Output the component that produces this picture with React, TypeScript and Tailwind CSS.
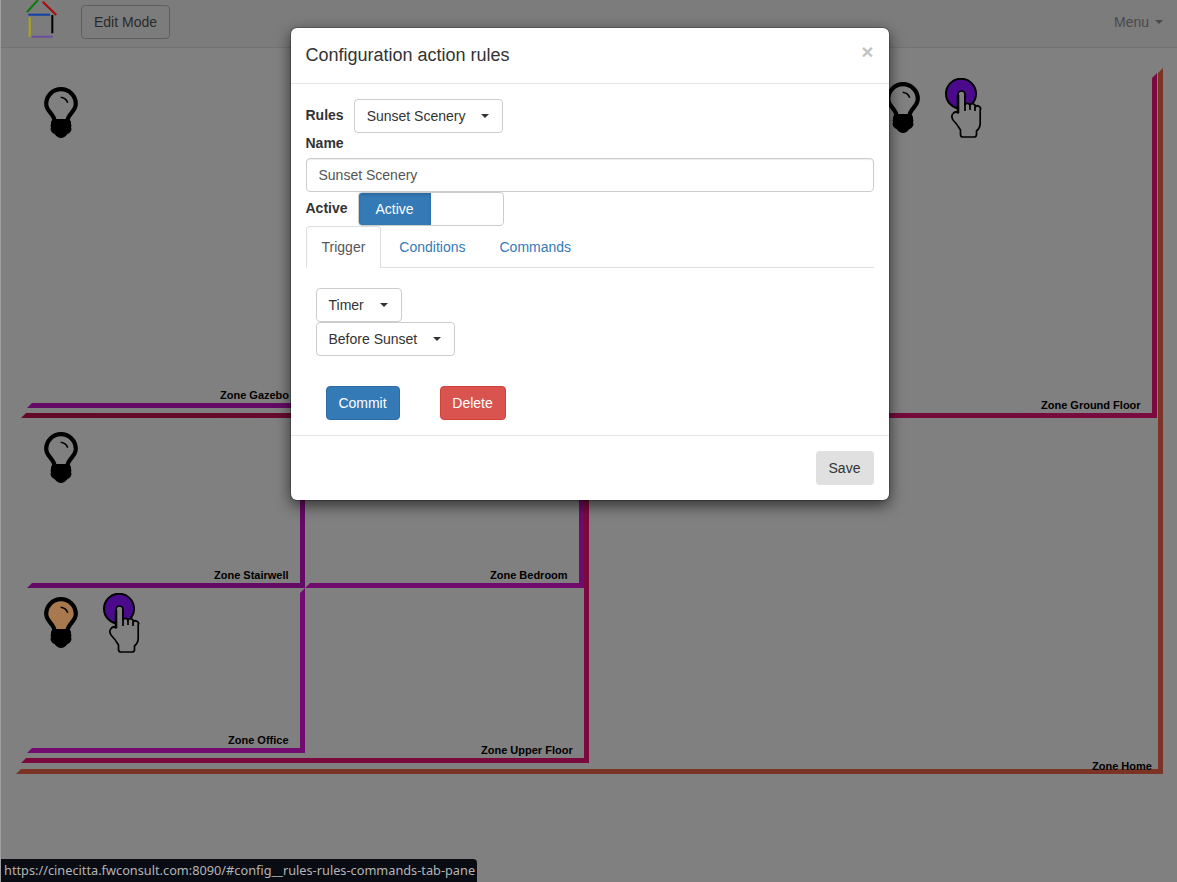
import React from 'react';

const Caret: React.FC<{ className?: string }> = ({ className = 'border-t-[#333]' }) => (
    <span className={`inline-block w-0 h-0 border-t-4 border-x-4 border-x-transparent ${className}`} />
);

const Dropdown: React.FC<{ label: string; className: string }> = ({ label, className }) => (
    <button className={`h-[34px] pl-3 pr-[13px] flex items-center justify-between bg-white border border-[#ccc] rounded text-sm text-[#333] ${className}`}>
        <span>{label}</span>
        <Caret />
    </button>
);

const Logo: React.FC = () => (
    <svg width="34" height="40" viewBox="0 0 34 40" className="ml-6 shrink-0 self-start" strokeWidth="2" fill="none">
        <path d="M2 12 13 0" stroke="#0c7a0c" />
        <path d="M17.7 1.7 31.3 15" stroke="#aa0a0a" />
        <path d="M3.3 14.7H25" stroke="#1040a8" />
        <path d="M4.7 17.3V36.7" stroke="#b0a80a" />
        <path d="M27.3 15V33.3" stroke="#000" />
        <path d="M6.7 36.7H27.7" stroke="#6a4fa0" />
    </svg>
);

const Bulb: React.FC<{ fill?: string; className: string }> = ({ fill = 'none', className }) => (
    <svg width="34" height="51" viewBox="0 0 34 51" className={`absolute ${className}`}>
        <path
            d="M10.5 34C10.5 27 2.2 24.5 2.2 17A14.8 14.8 0 0 1 31.8 17C31.8 24.5 23.5 27 23.5 34Z"
            fill={fill}
            stroke="#000"
            strokeWidth="4.2"
        />
        <path d="M16.7 10.3Q22 11 23.7 15.7" fill="none" stroke="#000" strokeWidth="1.6" />
        <path
            d="M8 33H26Q27.5 35 27 37L27.5 38.5 27 40 27.5 42Q27 45.5 23.5 47Q20.5 51 17 51Q13.5 51 10.5 47Q7 45.5 6.5 42L7 40 6.5 38.5 7 37Q6.5 35 8 33Z"
            fill="#000"
        />
    </svg>
);

const Hand: React.FC<{ className: string }> = ({ className }) => (
    <svg width="38" height="61" viewBox="0 0 38 61" className={`absolute ${className}`}>
        <circle cx="16" cy="15.7" r="15" fill="#4b0a8c" stroke="#000" strokeWidth="2" />
        <path
            d="M13 35V16.5A3.5 3.5 0 0 1 20 16.5V27A2.6 2.6 0 0 1 25 27.5A2.6 2.6 0 0 1 30 29.5A2.7 2.7 0 0 1 35.2 32V45Q35.2 50 31.5 53V56.5Q31.5 59 29 59H18Q15.5 59 15.5 56.5V52Q12 46 8 42Q5.5 38 8.5 35Q11 33 13 35Z"
            fill="#808080"
            stroke="#000"
            strokeWidth="1.7"
            strokeLinejoin="round"
        />
        <path d="M13 17V35" fill="none" stroke="#000" strokeWidth="2.6" />
        <path d="M20 16.5V33M25 27.5V32M30 29.5V33" fill="none" stroke="#000" strokeWidth="1.7" />
    </svg>
);

const ZoneLines: React.FC = () => (
    <svg width="1177" height="882" viewBox="0 0 1177 882" className="absolute -left-px top-0">
        <defs>
            <linearGradient id="ground" x1="0" x2="1" y1="0" y2="0">
                <stop offset="0" stopColor="#620a28" />
                <stop offset="1" stopColor="#7a0a40" />
            </linearGradient>
        </defs>
        <polygon points="16,774 21,769 1158,769 1158,73 1163,68 1163,774" fill="#7a3324" />
        <polygon points="21,418 26,413 1152,413 1152,78 1157,73 1157,418" fill="url(#ground)" />
        <polygon points="27,408 32,403 300,403 300,408" fill="#640a64" />
        <polygon points="21,763 26,758 584,758 584,490 589,490 589,763" fill="#7a0a3e" />
        <polygon points="27,588 32,583 300,583 300,490 305,490 305,588" fill="#640a64" />
        <polygon points="305,588 310,583 579,583 579,490 584,490 584,588" fill="#700a6c" />
        <polygon points="27,753 32,748 300,748 300,593 305,588 305,753" fill="#720a72" />
    </svg>
);

const zoneLabelClass = 'absolute text-[11px] leading-3 font-bold text-black whitespace-nowrap';

export default function App() {
    return (
        <div className="relative w-[1177px] h-[882px] overflow-hidden bg-[#808080] border-l border-l-[#a0a0a0] font-['Liberation_Sans',Arial,sans-serif]">
            <nav className="h-12 flex items-center bg-[#7c7c7c] border-b border-b-[#727272]">
                <Logo />
                <button className="ml-[22px] mb-[3px] h-[34px] px-3 text-sm text-[#2a2a2a] border border-[#5f5f5f] rounded">
                    Edit Mode
                </button>
                <div className="ml-auto mr-[14px] mb-[3px] flex items-center gap-[6px] text-sm text-[#4a4a4a]">
                    Menu
                    <Caret className="border-t-[#4a4a4a]" />
                </div>
            </nav>

            <ZoneLines />
            <span className={`${zoneLabelClass} left-[219px] top-[389px]`}>Zone Gazebo</span>
            <span className={`${zoneLabelClass} left-[1040px] top-[399px]`}>Zone Ground Floor</span>
            <span className={`${zoneLabelClass} left-[213px] top-[569px]`}>Zone Stairwell</span>
            <span className={`${zoneLabelClass} left-[489px] top-[569px]`}>Zone Bedroom</span>
            <span className={`${zoneLabelClass} left-[227px] top-[734px]`}>Zone Office</span>
            <span className={`${zoneLabelClass} left-[480px] top-[744px]`}>Zone Upper Floor</span>
            <span className={`${zoneLabelClass} left-[1091px] top-[760px]`}>Zone Home</span>

            <Bulb className="left-[43px] top-[87px]" />
            <Bulb className="left-[43px] top-[432px]" />
            <Bulb className="left-[43px] top-[597px]" fill="#a8784e" />
            <Bulb className="left-[885px] top-[82px]" />
            <Hand className="left-[944px] top-[78px]" />
            <Hand className="left-[102px] top-[593px]" />

            <div className="absolute left-[289.5px] top-7 w-[598px] h-[472px] flex flex-col bg-white rounded-md shadow-[0_0_0_1px_rgba(0,0,0,0.2),0_5px_15px_rgba(0,0,0,0.65)] text-sm text-[#333]">
                <div className="h-14 px-[15px] pb-[2px] flex items-center justify-between border-b border-b-[#e5e5e5]">
                    <h4 className="text-lg text-[#333]">Configuration action rules</h4>
                    <span className="text-[21px] font-bold leading-none text-[#c4c4c4] mb-[7px]">×</span>
                </div>

                <div className="flex-1 p-[15px]">
                    <div className="flex items-center gap-[10px]">
                        <label className="font-bold mb-[2px]">Rules</label>
                        <Dropdown label="Sunset Scenery" className="w-[149px]" />
                    </div>
                    <label className="block font-bold leading-5 mb-[5px]">Name</label>
                    <input
                        readOnly
                        value="Sunset Scenery"
                        className="block w-full h-[34px] px-3 bg-white border border-[#ccc] rounded text-sm text-[#555] shadow-[inset_0_1px_1px_rgba(0,0,0,0.075)]"
                    />
                    <div className="flex items-center gap-[10px]">
                        <label className="font-bold mb-[2px]">Active</label>
                        <div className="w-[146px] h-[34px] flex border border-[#ccc] rounded overflow-hidden bg-white">
                            <span className="w-[72px] flex items-center justify-center bg-[#337ab7] text-white shadow-[inset_0_2px_3px_rgba(0,0,0,0.15)]">
                                Active
                            </span>
                        </div>
                    </div>

                    <div className="h-[42px] flex border-b border-b-[#ddd]">
                        <span className="h-[42px] px-[15px] flex items-center bg-white border border-[#ddd] border-b-white rounded-t text-[#555]">
                            Trigger
                        </span>
                        <span className="ml-[3px] px-[15px] flex items-center text-[#337ab7]">Conditions</span>
                        <span className="ml-[4px] px-[15px] flex items-center text-[#337ab7]">Commands</span>
                    </div>

                    <div className="pt-5 px-[10px]">
                        <div className="flex flex-col items-start">
                            <Dropdown label="Timer" className="w-[86px]" />
                            <Dropdown label="Before Sunset" className="w-[139px]" />
                        </div>
                        <div className="mt-[30px] ml-[10px] flex gap-10">
                            <button className="h-[34px] w-[74px] bg-[#337ab7] border border-[#2e6da4] rounded text-white">
                                Commit
                            </button>
                            <button className="h-[34px] w-[66px] bg-[#d9534f] border border-[#d43f3a] rounded text-white">
                                Delete
                            </button>
                        </div>
                    </div>
                </div>

                <div className="h-[65px] p-[15px] flex justify-end border-t border-t-[#e5e5e5]">
                    <button className="h-[34px] w-[58px] bg-[#e0e0e0] rounded text-[#333]">Save</button>
                </div>
            </div>

            <div className="absolute -left-px bottom-0 h-[23px] pl-[4px] pr-[2px] flex items-center bg-[#0a0c14] rounded-tr text-[12.75px] text-[#b4b4b4] font-['Noto_Sans',sans-serif] whitespace-nowrap">
                https://cinecitta.fwconsult.com:8090/#config__rules-rules-commands-tab-pane
            </div>
        </div>
    );
}
